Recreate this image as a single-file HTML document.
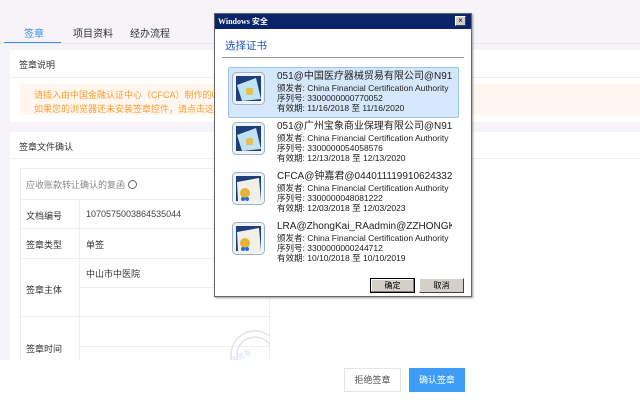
<!DOCTYPE html>
<html><head><meta charset="utf-8"><style>
*{margin:0;padding:0;box-sizing:border-box}
body{width:640px;height:400px;overflow:hidden;background:#f6f4f8;font-family:"Liberation Sans","Noto Sans CJK SC",sans-serif;font-size:9px;color:#333;position:relative}
.a{position:absolute}
.w{background:#fff}
.t{white-space:nowrap}
.cert .ttl{font-size:10px;color:#222;line-height:13px}
.cert .ln{font-size:8.5px;color:#222;line-height:10px}
</style></head><body>
<div class="a t" style="left:24px;top:25px;font-size:10px;color:#3a8ee6">签章</div>
<div class="a t" style="left:73px;top:25px;font-size:10px">项目资料</div>
<div class="a t" style="left:130px;top:25px;font-size:10px">经办流程</div>
<div class="a" style="left:4px;top:42px;width:57px;height:2px;background:#3a8ee6"></div>
<div class="a" style="left:0;top:43px;width:640px;height:1px;background:#e8e8ee"></div>

<div class="a w" style="left:10px;top:50px;width:630px;height:72px"></div>
<div class="a t" style="left:19px;top:58px;font-size:9px">签章说明</div>
<div class="a" style="left:10px;top:77px;width:630px;height:1px;background:#f0eef3"></div>
<div class="a" style="left:20px;top:84px;width:620px;height:31px;background:#fff7ef"></div>
<div class="a t" style="left:34px;top:88px;color:#f5a035;line-height:14px;font-size:9px">请插入由中国金融认证中心（CFCA）制作的USBKEY<br>如果您的浏览器还未安装签章控件，请点击这里下载</div>

<div class="a w" style="left:10px;top:132px;width:630px;height:228px"></div>
<div class="a t" style="left:19px;top:140px">签章文件确认</div>
<div class="a" style="left:10px;top:158px;width:630px;height:1px;background:#f0eef3"></div>
<div class="a" style="left:20px;top:168px;width:250px;height:192px;border:1px solid #eeedf2;border-bottom:none"></div>
<div class="a t" style="left:26px;top:178px;color:#888">应收账款转让确认的复函 <span style="display:inline-block;width:9px;height:9px;border:1px solid #666;border-radius:50%;vertical-align:-1px"></span></div>
<div class="a" style="left:20px;top:199px;width:250px;height:1px;background:#eeedf2"></div>
<div class="a" style="left:20px;top:228px;width:250px;height:1px;background:#eeedf2"></div>
<div class="a" style="left:20px;top:258px;width:250px;height:1px;background:#eeedf2"></div>
<div class="a" style="left:80px;top:287px;width:190px;height:1px;background:#eeedf2"></div>
<div class="a" style="left:20px;top:316px;width:250px;height:1px;background:#eeedf2"></div>
<div class="a" style="left:80px;top:346px;width:190px;height:1px;background:#eeedf2"></div>
<div class="a" style="left:79px;top:199px;width:1px;height:161px;background:#eeedf2"></div>
<div class="a t" style="left:26px;top:209px">文档编号</div>
<div class="a t" style="left:86px;top:209px;color:#444">1070575003864535044</div>
<div class="a t" style="left:26px;top:238px">签章类型</div>
<div class="a t" style="left:86px;top:238px">单签</div>
<div class="a t" style="left:86px;top:267px">中山市中医院</div>
<div class="a t" style="left:26px;top:283px">签章主体</div>
<div class="a t" style="left:26px;top:342px">签章时间</div>
<svg class="a" style="left:220px;top:325px" width="50" height="35"><g fill="none" stroke="#dde3f0" stroke-width="1.5"><circle cx="35" cy="30" r="24"/><circle cx="35" cy="30" r="18"/></g><text x="10" y="34" font-size="7" fill="#dde3f0" transform="rotate(-25 20 30)">未签章</text></svg>

<div class="a w" style="left:0;top:360px;width:640px;height:40px"></div>
<div class="a t" style="left:344px;top:368px;width:57px;height:24px;border:1px solid #e3e3e8;background:#fff;text-align:center;line-height:22px;color:#555">拒绝签章</div>
<div class="a t" style="left:409px;top:368px;width:56px;height:24px;background:#3c9cf6;color:#fff;text-align:center;line-height:24px">确认签章</div>

<!-- dialog -->
<div class="a" style="left:214px;top:13px;width:258px;height:284px;background:#fff;border:1px solid #666;box-shadow:1px 1px 2px #999"></div>
<div class="a" style="left:215px;top:14px;width:256px;height:15px;background:#0a246a"></div>
<div class="a t" style="left:218px;top:16px;color:#fff;font-weight:bold;font-size:8px;font-family:'Liberation Serif','Noto Sans CJK SC',serif">Windows 安全</div>
<div class="a" style="left:455px;top:16px;width:11px;height:10px;background:#d4d0c8;border:1px solid #fff;border-right-color:#404040;border-bottom-color:#404040;font-size:8px;line-height:8px;text-align:center;color:#000">×</div>
<div class="a t" style="left:225px;top:38px;color:#1f55c4;font-size:10.5px">选择证书</div>
<div class="a" style="left:222px;top:57px;width:242px;height:1px;background:#999"></div>
<div class="a" style="left:228px;top:67px;width:231px;height:51px;background:#d5e7fa;border:1px solid #9cc4ef;border-radius:2px"></div>

<svg width="0" height="0" style="position:absolute"><defs>
<g id="card"><rect x="0.5" y="0.5" width="32" height="32" rx="4" fill="#eef3f7" stroke="#9fb2c2"/><rect x="4" y="4" width="25" height="25" fill="#1f3f7a"/><polygon points="5,13 24,6 29,27 10,29" fill="#bfe3f2"/><rect x="14" y="16" width="7" height="7" rx="1.5" fill="#e7bf55"/></g>
<g id="seal"><rect x="0.5" y="0.5" width="32" height="32" rx="4" fill="#eef3f7" stroke="#9fb2c2"/><rect x="4" y="4" width="25" height="25" fill="#1f3f7a"/><polygon points="5,10 27,6 29,29 6,29" fill="#f2efe6"/><circle cx="13" cy="21" r="5" fill="#e5b23a"/><circle cx="11" cy="27" r="2" fill="#2f6bd8"/><circle cx="15" cy="27" r="2" fill="#2f6bd8"/></g>
</defs></svg>
<svg class="a" style="left:232px;top:72px" width="34" height="34"><use href="#card"/></svg>
<svg class="a" style="left:232px;top:122px" width="34" height="34"><use href="#card"/></svg>
<svg class="a" style="left:232px;top:172px" width="34" height="34"><use href="#seal"/></svg>
<svg class="a" style="left:232px;top:222px" width="34" height="34"><use href="#seal"/></svg>

<div class="a cert t" style="left:277px;top:70px;width:175px;overflow:hidden"><div class="ttl">051@中国医疗器械贸易有限公司@N91440</div><div class="ln">颁发者: China Financial Certification Authority</div><div class="ln">序列号: 3300000000770052</div><div class="ln">有效期: 11/16/2018 至 11/16/2020</div></div>
<div class="a cert t" style="left:277px;top:120px;width:175px;overflow:hidden"><div class="ttl">051@广州宝象商业保理有限公司@N91440</div><div class="ln">颁发者: China Financial Certification Authority</div><div class="ln">序列号: 3300000054058576</div><div class="ln">有效期: 12/13/2018 至 12/13/2020</div></div>
<div class="a cert t" style="left:277px;top:170px;width:175px;overflow:hidden"><div class="ttl">CFCA@钟嘉君@0440111199106243324</div><div class="ln">颁发者: China Financial Certification Authority</div><div class="ln">序列号: 3300000048081222</div><div class="ln">有效期: 12/03/2018 至 12/03/2023</div></div>
<div class="a cert t" style="left:277px;top:220px;width:175px;overflow:hidden"><div class="ttl">LRA@ZhongKai_RAadmin@ZZHONGKA</div><div class="ln">颁发者: China Financial Certification Authority</div><div class="ln">序列号: 3300000000244712</div><div class="ln">有效期: 10/10/2018 至 10/10/2019</div></div>

<div class="a t" style="left:370px;top:278px;width:45px;height:15px;background:#d4d0c8;border:1px solid #000;box-shadow:inset -1px -1px #808080,inset 1px 1px #fff;text-align:center;line-height:13px;font-size:8px;color:#000">确定</div>
<div class="a t" style="left:419px;top:278px;width:45px;height:15px;background:#d4d0c8;border:1px solid #fff;border-right-color:#404040;border-bottom-color:#404040;text-align:center;line-height:13px;font-size:8px;color:#000">取消</div>
</body></html>
